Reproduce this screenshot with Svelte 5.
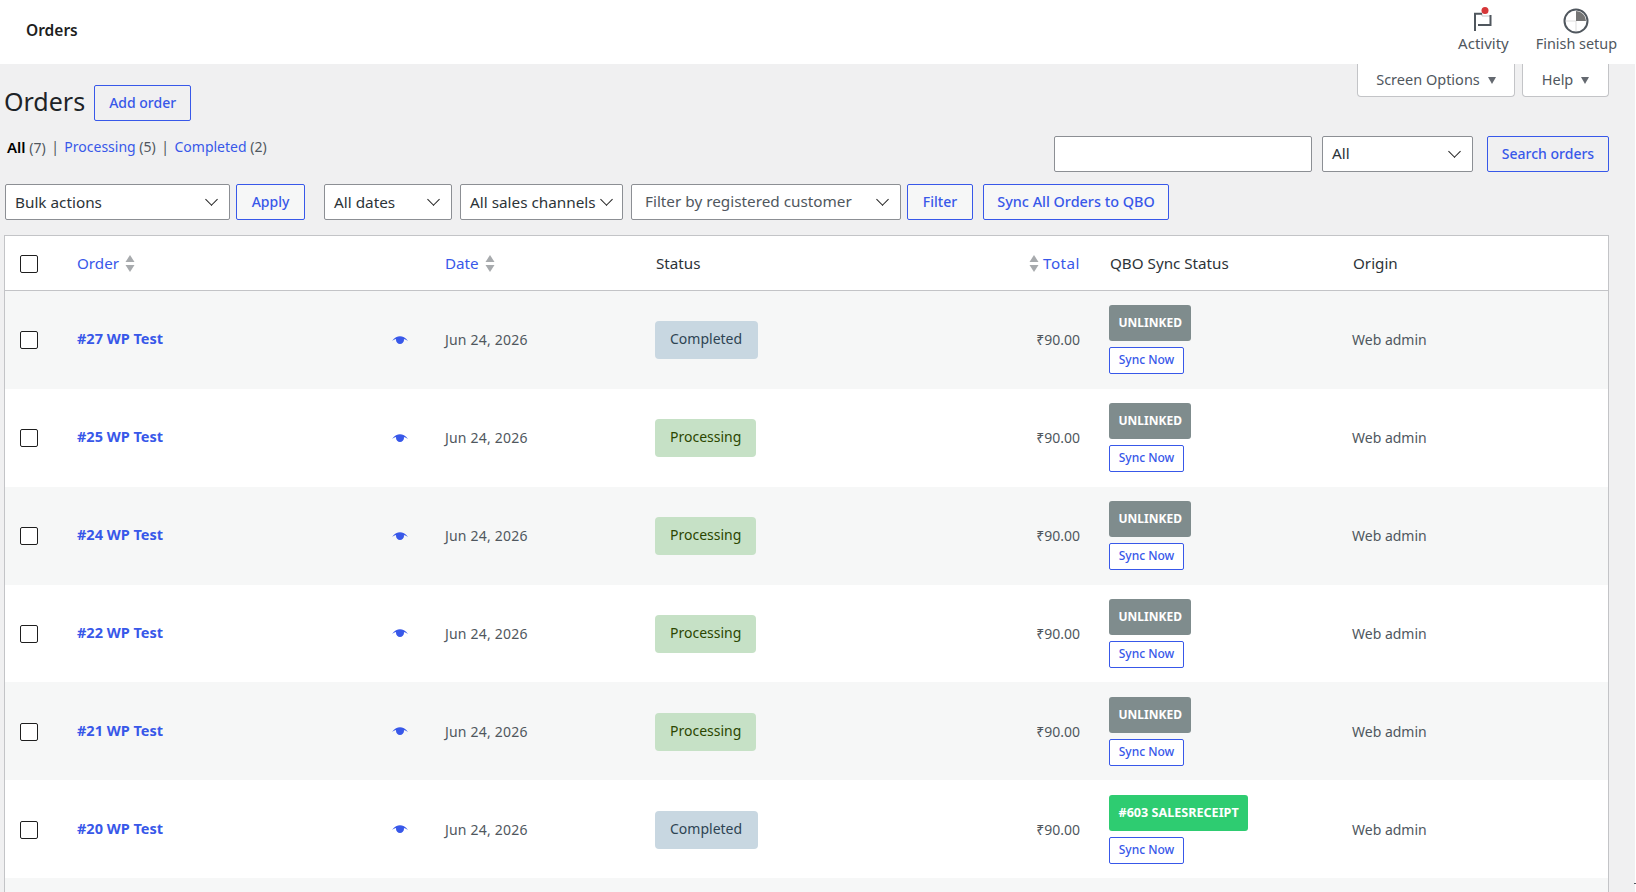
<script>
	const rows = [
		{ id: 27, status: 'Completed', qbo: 'UNLINKED' },
		{ id: 25, status: 'Processing', qbo: 'UNLINKED' },
		{ id: 24, status: 'Processing', qbo: 'UNLINKED' },
		{ id: 22, status: 'Processing', qbo: 'UNLINKED' },
		{ id: 21, status: 'Processing', qbo: 'UNLINKED' },
		{ id: 20, status: 'Completed', qbo: '#603 SALESRECEIPT' }
	];
</script>

{#snippet sortIcon()}
	<svg class="sort" width="10" height="17" viewBox="0 0 10 17" aria-hidden="true">
		<path d="M5 0l4.500 7h-9z" />
		<path d="M5 17l4.500-7h-9z" />
	</svg>
{/snippet}

<header class="topbar">
	<div class="page-name">Orders</div>
	<nav class="activity">
		<div class="activity-item">
			<svg class="flag" width="26" height="26" viewBox="0 0 26 26" aria-hidden="true">
				<path d="M12 5.700v2.300h8" fill="none" stroke="#c3c4c7" stroke-width="1" />
				<path d="M5 23V5.700h7M20.500 7v10H8" fill="none" stroke="#50575e" stroke-width="2" />
				<circle cx="15" cy="2.500" r="3.500" fill="#d63638" />
			</svg>
			<span class="flag-label">Activity</span>
		</div>
		<div class="activity-item">
			<svg width="26" height="26" viewBox="0 0 26 26" aria-hidden="true">
				<path d="M13 13V3a10 10 0 0 1 10 10z" fill="#757575" />
				<path d="M13 13v10M3 13h10" stroke="#ddd" stroke-width="1" />
				<circle cx="13" cy="13" r="11.500" fill="none" stroke="#50575e" stroke-width="2" />
			</svg>
			<span>Finish setup</span>
		</div>
	</nav>
</header>

<main class="wrap">
	<div class="screen-tabs">
		<div class="tab tab-options">Screen Options<i class="caret"></i></div>
		<div class="tab tab-help">Help<i class="caret"></i></div>
	</div>

	<div class="title-row">
		<h1>Orders</h1>
		<a class="btn add-order" href="#add">Add order</a>
	</div>

	<div class="filters-row">
		<ul class="subsub">
			<li><b>All</b> <span>(7)</span></li>
			<li class="sep">|</li>
			<li><a href="#processing">Processing</a> <span>(5)</span></li>
			<li class="sep">|</li>
			<li><a href="#completed">Completed</a> <span>(2)</span></li>
		</ul>
		<div class="search">
			<input type="text" class="search-input" />
			<div class="select search-type">All</div>
			<a class="btn search-btn" href="#search">Search orders</a>
		</div>
	</div>

	<div class="tablenav">
		<div class="select bulk">Bulk actions</div>
		<a class="btn tint apply" href="#apply">Apply</a>
		<div class="select dates">All dates</div>
		<div class="select channels">All sales channels</div>
		<div class="select customer">Filter by registered customer</div>
		<a class="btn tint filter" href="#filter">Filter</a>
		<a class="btn tint sync-all" href="#sync">Sync All Orders to QBO</a>
	</div>

	<table>
		<colgroup>
			<col style="width: 64px" />
			<col style="width: 368px" />
			<col style="width: 210px" />
			<col style="width: 303px" />
			<col style="width: 151px" />
			<col style="width: 243px" />
			<col />
		</colgroup>
		<thead>
			<tr>
				<th class="cb"><span class="checkbox"></span></th>
				<th class="sortable"><a href="#order">Order</a>{@render sortIcon()}</th>
				<th class="sortable"><a href="#date">Date</a>{@render sortIcon()}</th>
				<th>Status</th>
				<th class="total">{@render sortIcon()}<a href="#total">Total</a></th>
				<th>QBO Sync Status</th>
				<th>Origin</th>
			</tr>
		</thead>
		<tbody>
			{#each rows as row}
				<tr>
					<td class="cb"><span class="checkbox"></span></td>
					<td>
						<div class="order-cell">
							<a class="order-link" href="#o">#{row.id} WP Test</a>
							<svg class="eye" width="16" height="8" viewBox="0 0 16 8" aria-hidden="true">
								<path d="M0 5C2.500 1.600 5.500.3 8 .3s5.500 1.300 8 4.700C14.500 3.900 13.200 3.300 11.900 3 12 3.300 12 3.600 12 4c0 2.200-1.800 4-4 4S4 6.200 4 4c0-.4 0-.7.100-1C2.800 3.300 1.500 3.900 0 5z" />
							</svg>
						</div>
					</td>
					<td class="date">Jun 24, 2026</td>
					<td>
						<span class="mark {row.status.toLowerCase()}">{row.status}</span>
					</td>
					<td class="total">₹90.00</td>
					<td>
						<span class="qbo" class:linked={row.qbo !== 'UNLINKED'}>{row.qbo}</span>
						<a class="sync-now" href="#now">Sync Now</a>
					</td>
					<td>Web admin</td>
				</tr>
			{/each}
			<tr class="partial"><td colspan="7"></td></tr>
		</tbody>
	</table>
</main>

<div class="edge"></div>

<style>
	:global(body) {
		margin: 0;
		background: #f0f0f1;
		font-family: 'Noto Sans', sans-serif;
		font-size: 14px;
		color: #3c434a;
		overflow: hidden;
	}

	a {
		text-decoration: none;
		color: #3858e9;
	}

	.topbar {
		height: 64px;
		background: #fff;
		display: flex;
		justify-content: space-between;
		align-items: center;
		box-sizing: border-box;
		padding: 0 19px 2px 26px;
	}

	.page-name {
		font-weight: 600;
		font-size: 15.500px;
		color: #1e1e1e;
		margin-bottom: 2px;
	}

	.activity {
		display: flex;
		gap: 27px;
	}

	.activity-item {
		display: flex;
		flex-direction: column;
		align-items: center;
		color: #50575e;
		font-size: 14.400px;
		line-height: 20px;
	}

	.flag {
		overflow: visible;
	}

	.flag-label {
		font-size: 15px;
		margin-top: -1px;
	}

	.wrap {
		padding: 0 27px 0 4px;
		position: relative;
	}

	.edge {
		position: fixed;
		top: 64px;
		right: 0;
		bottom: 0;
		width: 1px;
		background: #fff;
	}

	.edge::after {
		content: '';
		position: absolute;
		right: 0;
		bottom: 8px;
		width: 2px;
		height: 1px;
		background: #50575e;
	}

	.screen-tabs {
		position: absolute;
		top: 0;
		right: 27px;
		display: flex;
		gap: 7px;
	}

	.tab {
		height: 33px;
		padding-bottom: 2px;
		background: #fff;
		border: 1px solid #c3c4c7;
		border-top: none;
		border-radius: 0 0 4px 4px;
		color: #50575e;
		font-size: 14.500px;
		display: flex;
		align-items: center;
		justify-content: center;
		gap: 8px;
		box-sizing: border-box;
	}

	.tab-options {
		width: 158px;
	}

	.tab-help {
		width: 87px;
	}

	.caret {
		width: 0;
		height: 0;
		margin-top: 2px;
		border-left: 4.500px solid transparent;
		border-right: 4.500px solid transparent;
		border-top: 7px solid #646970;
	}

	.title-row {
		display: flex;
		align-items: center;
		gap: 9px;
		padding-top: 21px;
	}

	h1 {
		margin: 0 0 4px;
		height: 32px;
		font-size: 25px;
		font-weight: 400;
		color: #1d2327;
		line-height: 32px;
	}

	.btn {
		box-sizing: border-box;
		height: 36px;
		padding-bottom: 2px;
		display: flex;
		align-items: center;
		justify-content: center;
		border: 1px solid #3858e9;
		border-radius: 2px;
		font-weight: 500;
	}

	.add-order {
		width: 97px;
	}

	.tint {
		background: #f6f7f7;
	}

	.filters-row {
		display: flex;
		justify-content: space-between;
		margin-top: 15px;
	}

	.subsub {
		display: flex;
		gap: 5.500px;
		list-style: none;
		margin: 0;
		padding: 1px 0 0 3px;
		line-height: 20px;
		color: #50575e;
	}

	.subsub b {
		color: #000;
		font-size: 15px;
		font-weight: 600;
	}

	.search {
		display: flex;
	}

	.search-input {
		box-sizing: border-box;
		width: 258px;
		height: 36px;
		border: 1px solid #8c8f94;
		border-radius: 2px;
		background: #fff;
		margin: 0 10px 0 0;
	}

	.select {
		box-sizing: border-box;
		height: 36px;
		line-height: 34px;
		padding-left: 9px;
		background: #fff;
		border: 1px solid #8c8f94;
		border-radius: 2px;
		color: #2c3338;
		font-size: 15.300px;
		white-space: nowrap;
		position: relative;
	}

	.select::after {
		content: '';
		position: absolute;
		right: 13px;
		top: 10px;
		width: 8px;
		height: 8px;
		border-right: 1.700px solid #1e1e1e;
		border-bottom: 1.700px solid #1e1e1e;
		transform: rotate(45deg);
	}

	.search-type {
		width: 151px;
		margin-right: 14px;
		line-height: 32px;
	}

	.search-btn {
		width: 122px;
	}

	.tablenav {
		display: flex;
		gap: 8px;
		margin-top: 12px;
	}

	.bulk {
		width: 225px;
		margin: 0 -2px 0 1px;
	}

	.apply {
		width: 69px;
		margin-right: 11px;
	}

	.dates {
		width: 128px;
	}

	.channels {
		width: 163px;
	}

	.channels::after {
		right: 11px;
	}

	.customer {
		width: 270px;
		line-height: 32px;
		padding-left: 13px;
		color: #50575e;
	}

	.filter {
		width: 66px;
		margin-left: -2px;
		margin-right: 2px;
	}

	.sync-all {
		width: 186px;
		font-size: 14.400px;
	}

	table {
		margin-top: 15px;
		width: 1605px;
		box-sizing: border-box;
		table-layout: fixed;
		border-collapse: separate;
		border-spacing: 0;
		background: #fff;
		border: 1px solid #c3c4c7;
		border-bottom: none;
	}

	th {
		height: 54px;
		padding: 0 0 0 9px;
		text-align: left;
		font-size: 15.200px;
		font-weight: 400;
		color: #2c3338;
		border-bottom: 1px solid #c3c4c7;
		white-space: nowrap;
	}

	th.sortable {
		padding-left: 8px;
	}

	th a,
	.sort {
		vertical-align: middle;
	}

	th a {
		position: relative;
		top: -1px;
	}

	.sort {
		margin: 0 0 0 6px;
		fill: #a7aaad;
	}

	th.total .sort {
		margin: 0 4px 0 0;
	}

	th.total a {
		letter-spacing: 0.500px;
	}

	td {
		height: 97.850px;
		box-sizing: border-box;
		padding: 0 0 0 8px;
		color: #50575e;
	}

	tbody tr:nth-child(odd) td {
		background: #f6f7f7;
	}

	.cb {
		padding: 0 0 0 15px;
	}

	.checkbox {
		display: block;
		box-sizing: border-box;
		width: 18px;
		height: 18px;
		margin-top: 1px;
		background: #fff;
		border: 1.500px solid #1e1e1e;
		border-radius: 2px;
	}

	.order-cell {
		display: flex;
		justify-content: space-between;
		align-items: center;
		padding-right: 29px;
	}

	.order-link {
		font-size: 14.500px;
		font-weight: 700;
		margin-bottom: 3px;
	}

	.eye {
		fill: #3858e9;
	}

	.date {
		letter-spacing: 0.200px;
	}

	.mark {
		display: inline-block;
		height: 38px;
		margin-top: 1px;
		line-height: 36px;
		padding: 0 15px;
		border-radius: 4px;
	}

	.completed {
		background: #c8d7e1;
		color: #2e4453;
		padding-right: 16px;
	}

	.processing {
		background: #c6e1c6;
		color: #2c4700;
	}

	td.total,
	th.total {
		text-align: right;
		padding: 0 21px 0 0;
	}

	.qbo {
		display: block;
		width: fit-content;
		height: 36px;
		line-height: 36px;
		box-sizing: border-box;
		padding: 0 9.500px;
		background: #7f8c8d;
		color: #fff;
		font-size: 12px;
		font-weight: 700;
		border-radius: 3px;
	}

	.qbo.linked {
		background: #2ecc71;
		font-size: 12.600px;
	}

	.sync-now {
		display: block;
		box-sizing: border-box;
		width: 75px;
		height: 27px;
		line-height: 24px;
		margin-top: 6px;
		text-align: center;
		font-size: 12px;
		font-weight: 500;
		background: #fff;
		border: 1px solid #3858e9;
		border-radius: 2px;
	}

	.partial td {
		height: 20px;
	}
</style>
